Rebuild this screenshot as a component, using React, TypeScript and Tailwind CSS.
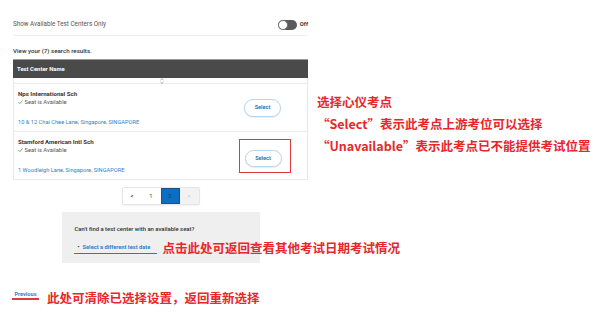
import React from 'react';

const CJK = "font-['Noto_Sans_CJK_SC',sans-serif]";

function Check() {
  return (
    <svg width="5" height="4" viewBox="0 0 10 8" className="mr-[1.5px]">
      <path d="M1 4.2 L3.8 7 L9 1" fill="none" stroke="#3aa54a" strokeWidth="1.6" />
    </svg>
  );
}

function SelectButton({ h }: { h: string }) {
  return (
    <button className={`w-[37px] ${h} rounded-full border-[1.5px] border-[#b4d6f0] bg-white text-[5.5px] font-bold text-[#2a73b8] shadow-[0_1px_1px_rgba(0,0,0,0.08)]`}>
      Select
    </button>
  );
}

function CenterRow({ name, address, last, boxed }: { name: string; address: string; last?: boolean; boxed?: boolean }) {
  return (
    <div className={`flex items-center justify-between pl-[4px] ${boxed ? 'pr-[16px]' : 'pr-[26px]'} ${last ? 'h-[47px]' : 'h-[48px] border-b border-[#ececec]'}`}>
      <div className="flex flex-col self-start pt-[6px]">
        <div className="h-[8px] leading-[8px] text-[6.1px] font-bold text-[#333]">{name}</div>
        <div className="flex h-[8px] items-center text-[5.8px] text-[#555]">
          <Check />
          Seat is Available
        </div>
        <div className="mt-[12px] h-[8px] leading-[8px] text-[5.7px] text-[#2f7fcf]">{address}</div>
      </div>
      {boxed ? (
        <div className="border-[1.5px] border-[#e0383e] pl-[4.5px] pr-[8.5px] pt-[3.5px] pb-[4.5px]">
          <SelectButton h="h-[17px]" />
        </div>
      ) : (
        <SelectButton h="h-[18px]" />
      )}
    </div>
  );
}

export default function App() {
  return (
    <div className="flex h-[325px] w-[599px] overflow-hidden bg-white font-['Roboto',sans-serif]">
      <div className="ml-[13px] flex w-[295px] shrink-0 flex-col pt-[14px]">
        <div className="flex h-[22px] items-center justify-between border-b border-[#efefef]">
          <span className="text-[6.3px] text-[#555]">Show Available Test Centers Only</span>
          <div className="flex items-center gap-[3px]">
            <div className="flex h-[10px] w-[19px] items-center rounded-full bg-[#5a5a5a]">
              <div className="h-[10px] w-[10px] rounded-full border border-[#777] bg-white" />
            </div>
            <span className="text-[5.8px] font-bold text-[#333]">Off</span>
          </div>
        </div>

        <div className="mt-[10px] h-[10px] leading-[10px] text-[6.2px] font-medium text-[#333]">View your (7) search results.</div>

        <div className="mt-[3px] flex h-[19px] items-center border-t border-[#9a9a9a] bg-[#4a4a4a] pl-[4px] text-[5.9px] font-bold text-white">
          Test Center Name
        </div>
        <div className="border-x border-b border-[#e8e8e8]">
          <div className="flex h-[6px] justify-center border-b border-[#ececec] pl-[2px]">
            <svg width="4" height="6" viewBox="0 0 4 6">
              <path d="M0.5 2 L2 0.6 L3.5 2 M0.5 4 L2 5.4 L3.5 4" fill="none" stroke="#888" strokeWidth="0.7" />
            </svg>
          </div>
          <CenterRow name="Nps International Sch" address="10 & 12 Chai Chee Lane, Singapore, SINGAPORE" />
          <CenterRow name="Stamford American Intl Sch" address="1 Woodleigh Lane, Singapore, SINGAPORE" last boxed />
        </div>

        <div className="mt-[7px] flex justify-center">
          <div className="flex h-[18px] overflow-hidden rounded-[2px] border border-[#e6e6e6] text-[5.8px] shadow-[0_1px_2px_rgba(0,0,0,0.06)]">
            <div className="flex w-[19px] items-center justify-center font-bold text-[#444]">&lt;</div>
            <div className="flex w-[19px] items-center justify-center text-[#444]">1</div>
            <div className="flex w-[19px] items-center justify-center border border-[#2a4d7a] bg-[#0a6fc2] text-[#1d3b66]">2</div>
            <div className="flex w-[19px] items-center justify-center bg-[#f2f2f2] text-[#bbb]">&gt;</div>
          </div>
        </div>

        <div className="mx-auto mt-[7px] h-[51px] w-[198px] bg-[#efefef] pt-[13px]">
          <div className="ml-[13px] h-[8px] leading-[8px] text-[5.9px] font-medium text-[#333]">
            Can&apos;t find a test center with an available seat?
          </div>
          <div className="ml-[12px] mt-[9px] flex h-[12px] items-center">
            <div className="flex h-[12px] w-[83px] shrink-0 items-center border-b-[1.5px] border-[#e0383e] pl-[4px] text-[5.7px] font-bold text-[#2f7fcf]">
              <span className="mr-[3px] text-[#444]">•</span>
              Select a different test date
            </div>
            <span className={`ml-[6px] whitespace-nowrap text-[12.5px] leading-[16px] font-bold text-[#e8262b] ${CJK}`}>
              点击此处可返回查看其他考试日期考试情况
            </span>
          </div>
        </div>

        <div className="-ml-[1px] mt-[26px] flex items-end">
          <div className="flex h-[11px] w-[27px] items-start justify-center border-b-2 border-[#e0383e] pt-[1px] text-[5.6px] font-bold text-[#2f7fcf]">
            Previous
          </div>
          <span className={`mb-[-6px] ml-[8px] h-[16px] whitespace-nowrap text-[12.5px] leading-[16px] font-bold text-[#e8262b] ${CJK}`}>
            此处可清除已选择设置，返回重新选择
          </span>
        </div>
      </div>

      <div className={`ml-[9px] mt-[91px] flex flex-col whitespace-nowrap text-[12.5px] leading-[22px] font-bold text-[#e8262b] ${CJK}`}>
        <span>选择心仪考点</span>
        <span>“Select”表示此考点上游考位可以选择</span>
        <span>“Unavailable”表示此考点已不能提供考试位置</span>
      </div>
    </div>
  );
}
